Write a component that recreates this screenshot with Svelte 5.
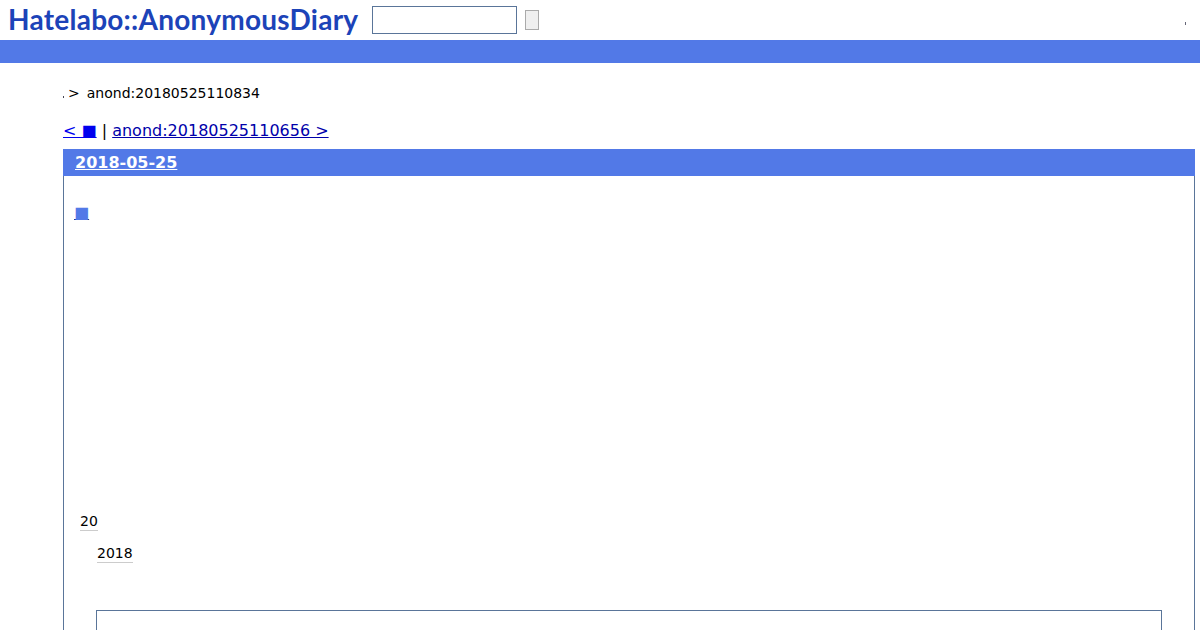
<script>
	const crumb = 'anond:20180525110834';
	const next = 'anond:20180525110656 >';
</script>

<header>
	<a class="logo" href="#top">Hatelabo::AnonymousDiary</a>
	<form>
		<input type="text" />
		<button type="button"></button>
	</form>
	<span class="tick"></span>
</header>
<div class="bar"></div>

<main>
	<p class="crumb"><span class="dot"></span><span class="gt">&gt;</span><span>{crumb}</span></p>
	<p class="pager"><a href="#prev">&lt; ■</a> | <a href="#next">{next}</a></p>

	<section class="day">
		<h2><a href="#day">2018-05-25</a></h2>
		<div class="body">
			<h3><a href="#sec">■</a></h3>
			<div class="count"><span>20</span></div>
			<div class="year"><span>2018</span></div>
			<div class="inner"></div>
		</div>
	</section>
</main>

<style>
	:global(body) {
		margin: 0;
		height: 630px;
		overflow: hidden;
		background: #fff;
		font-family: "DejaVu Sans", sans-serif;
		color: #000;
	}
	header {
		display: flex;
		align-items: center;
		height: 40px;
		padding-left: 8px;
	}
	.logo {
		width: 364px;
		padding-bottom: 2px;
		font-family: "Lato", sans-serif;
		font-weight: 700;
		font-size: 28px;
		letter-spacing: 0.25px;
		line-height: 37px;
		color: #1c43b8;
		text-decoration: none;
		white-space: nowrap;
	}
	form {
		display: flex;
		align-items: center;
		gap: 8px;
	}
	input {
		box-sizing: border-box;
		width: 145px;
		height: 28px;
		margin: 0;
		padding: 0;
		background: #fff;
		border: 1px solid #5a7599;
	}
	button {
		box-sizing: border-box;
		width: 14px;
		height: 20px;
		margin: 0;
		padding: 0;
		background: #efefef;
		border: 1px solid #aaa;
	}
	.tick {
		width: 1px;
		height: 3px;
		margin-left: 646px;
		margin-top: 6px;
		background: #667;
	}
	.bar {
		height: 23px;
		background: #5279e7;
	}
	main {
		padding: 0 5px 0 63px;
	}
	.crumb {
		display: flex;
		align-items: baseline;
		margin: 0;
		padding-top: 22px;
		font-size: 14px;
		line-height: 17px;
	}
	.dot {
		width: 1px;
		height: 2px;
		background: #445;
	}
	.gt {
		margin: 0 7px 0 4px;
	}
	.pager {
		margin: 19px 0 0;
		font-size: 16px;
		line-height: 19px;
	}
	.pager a {
		color: #00e;
	}
	.pager a:last-child {
		color: #00a;
	}
	.day {
		box-sizing: border-box;
		height: 600px;
		margin-top: 9px;
		border: 1px solid #5a7599;
		border-top: 0;
	}
	h2 {
		margin: 0 -1px;
		height: 27px;
		padding-left: 12px;
		background: #5279e7;
		font-size: 16px;
		font-weight: 700;
		line-height: 27px;
	}
	h2 a {
		color: #fff;
	}
	.body {
		padding: 27px 32px 0 10px;
	}
	h3 {
		margin: 0;
		font-size: 16px;
		font-weight: 400;
		line-height: 19px;
	}
	h3 a {
		color: #5279e7;
		text-decoration-color: #223a88;
	}
	.count {
		margin: 291px 0 0 6px;
		font-size: 14px;
		line-height: 17px;
	}
	.year {
		margin: 14px 0 0 23px;
		font-size: 14px;
		line-height: 17px;
	}
	.count span,
	.year span {
		display: inline-block;
		border-bottom: 1px solid #ccc;
	}
	.inner {
		height: 200px;
		margin: 47px 0 0 22px;
		border: 1px solid #5a7599;
	}
</style>
